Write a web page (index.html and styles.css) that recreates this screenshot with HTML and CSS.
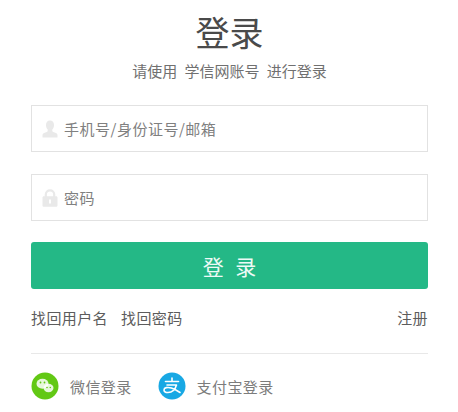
FILE: index.html
```html
<!DOCTYPE html>
<html lang="zh-CN">
<head>
    <meta charset="UTF-8">
    <meta name="viewport" content="width=device-width, initial-scale=1.0">
    <title>登录</title>
    <link rel="stylesheet" href="styles.css">
</head>
<body>
    <div class="login">
        <h1 class="title">登录</h1>
        <p class="subtitle">请使用 学信网账号 进行登录</p>

        <!-- 输入框 -->
        <div class="field">
            <svg class="field-icon" width="16" height="18" viewBox="0 0 16 18">
                <path fill="#e9e9e9" d="M8 .5c2.600 0 4 1.900 4 4.400 0 2-.8 3.700-1.700 4.700v1.500c0 .6 1 1 2.400 1.500 1.800.7 2.800 1.300 2.800 2.600v2.300H.5v-2.300c0-1.300 1-1.900 2.800-2.600 1.400-.5 2.400-.9 2.400-1.500V9.600C4.800 8.600 4 6.900 4 4.900 4 2.400 5.400.5 8 .5z"/>
            </svg>
            <span class="placeholder">手机号/身份证号/邮箱</span>
        </div>
        <div class="field">
            <svg class="field-icon" width="16" height="18" viewBox="0 0 16 18">
                <path fill="none" stroke="#e9e9e9" stroke-width="2.200" d="M3.800 8V5.500C3.800 3 5.700 1.300 8 1.300S12.200 3 12.200 5.500V8"/>
                <path fill="#e9e9e9" fill-rule="evenodd" d="M1.800 7.300h12.400c.7 0 1.300.6 1.300 1.300v7.900c0 .7-.6 1.300-1.300 1.300H1.800c-.7 0-1.300-.6-1.300-1.300V8.600c0-.7.6-1.300 1.300-1.300zM7 10.500v4h2v-4z"/>
            </svg>
            <span class="placeholder">密码</span>
        </div>

        <button class="submit">登 录</button>

        <div class="links">
            <a class="link" href="#">找回用户名</a>
            <a class="link" href="#">找回密码</a>
            <a class="link register" href="#">注册</a>
        </div>

        <!-- 第三方登录 -->
        <div class="others">
            <a class="other" href="#">
                <svg class="other-icon" width="28" height="28" viewBox="0 0 28 28">
                    <circle cx="14" cy="14" r="13.500" fill="#62c814"/>
                    <ellipse cx="11.500" cy="11.800" rx="6" ry="5" fill="#fff" fill-opacity=".85"/>
                    <ellipse cx="17.500" cy="16" rx="5" ry="4.200" fill="#fff" fill-opacity=".85"/>
                    <circle cx="9.500" cy="10.500" r=".9" fill="#62c814"/>
                    <circle cx="13.500" cy="10.500" r=".9" fill="#62c814"/>
                    <circle cx="16" cy="15.500" r=".8" fill="#62c814"/>
                    <circle cx="19.300" cy="15.500" r=".8" fill="#62c814"/>
                </svg>
                <span>微信登录</span>
            </a>
            <a class="other" href="#">
                <svg class="other-icon" width="28" height="28" viewBox="0 0 28 28">
                    <circle cx="14" cy="14" r="13.500" fill="#18a8e4"/>
                    <path fill="none" stroke="#fff" stroke-width="1.600" stroke-linecap="round" stroke-linejoin="round" d="M7.500 9.500h13M14 6v3.500M9 13h9.500c-1.300 4.500-4.500 7.500-8.500 7.500-2.700 0-4-1.200-4-2.600 0-2.200 3.600-3.200 7.500-1.800 3 1.100 5.500 2.500 8.500 4.400"/>
                </svg>
                <span>支付宝登录</span>
            </a>
        </div>
    </div>
</body>
</html>
```

FILE: styles.css
```css
/* 页面 */
body {
    margin: 0;
    background-color: #fff;
    font-family: "Noto Sans CJK SC", "Liberation Sans", sans-serif;
    color: #555;
}

.login {
    width: 397px;
    margin-left: 31px;
    padding-top: 9px;
}

/* 标题 */
.title {
    margin: 0;
    height: 46px;
    font-size: 34px;
    font-weight: 400;
    line-height: 46px;
    text-align: center;
    color: #4a4a4a;
}

.subtitle {
    margin: 6px 0 0;
    height: 20px;
    font-size: 15px;
    line-height: 20px;
    word-spacing: 4px;
    text-align: center;
    color: #707070;
}

/* 输入框 */
.field {
    display: flex;
    align-items: center;
    box-sizing: border-box;
    height: 47px;
    margin-top: 22px;
    padding-left: 10px;
    border: 1px solid #e2e2e2;
    background-color: #fff;
}

.subtitle + .field {
    margin-top: 24px;
}

.field-icon {
    flex: none;
    margin-right: 6px;
}

.placeholder {
    font-size: 15px;
    letter-spacing: .5px;
    color: #808080;
}

/* 登录按钮 */
.submit {
    display: block;
    width: 100%;
    height: 47px;
    margin-top: 21px;
    border: none;
    border-radius: 3px;
    background-color: #24b886;
    font-family: inherit;
    font-size: 21px;
    color: #eefaf6;
    word-spacing: 7px;
}

/* 链接 */
.links {
    display: flex;
    gap: 13px;
    margin-top: 19px;
    padding-bottom: 25px;
    border-bottom: 1px solid #e8e8e8;
}

.link {
    font-size: 15px;
    letter-spacing: .4px;
    line-height: 20px;
    color: #5c5c5c;
    text-decoration: none;
}

.register {
    margin-left: auto;
}

/* 第三方登录 */
.others {
    display: flex;
    gap: 26px;
    margin-top: 18px;
}

.other {
    display: flex;
    align-items: center;
    gap: 11px;
    font-size: 15px;
    letter-spacing: .4px;
    color: #7c7c7c;
    text-decoration: none;
}
```
